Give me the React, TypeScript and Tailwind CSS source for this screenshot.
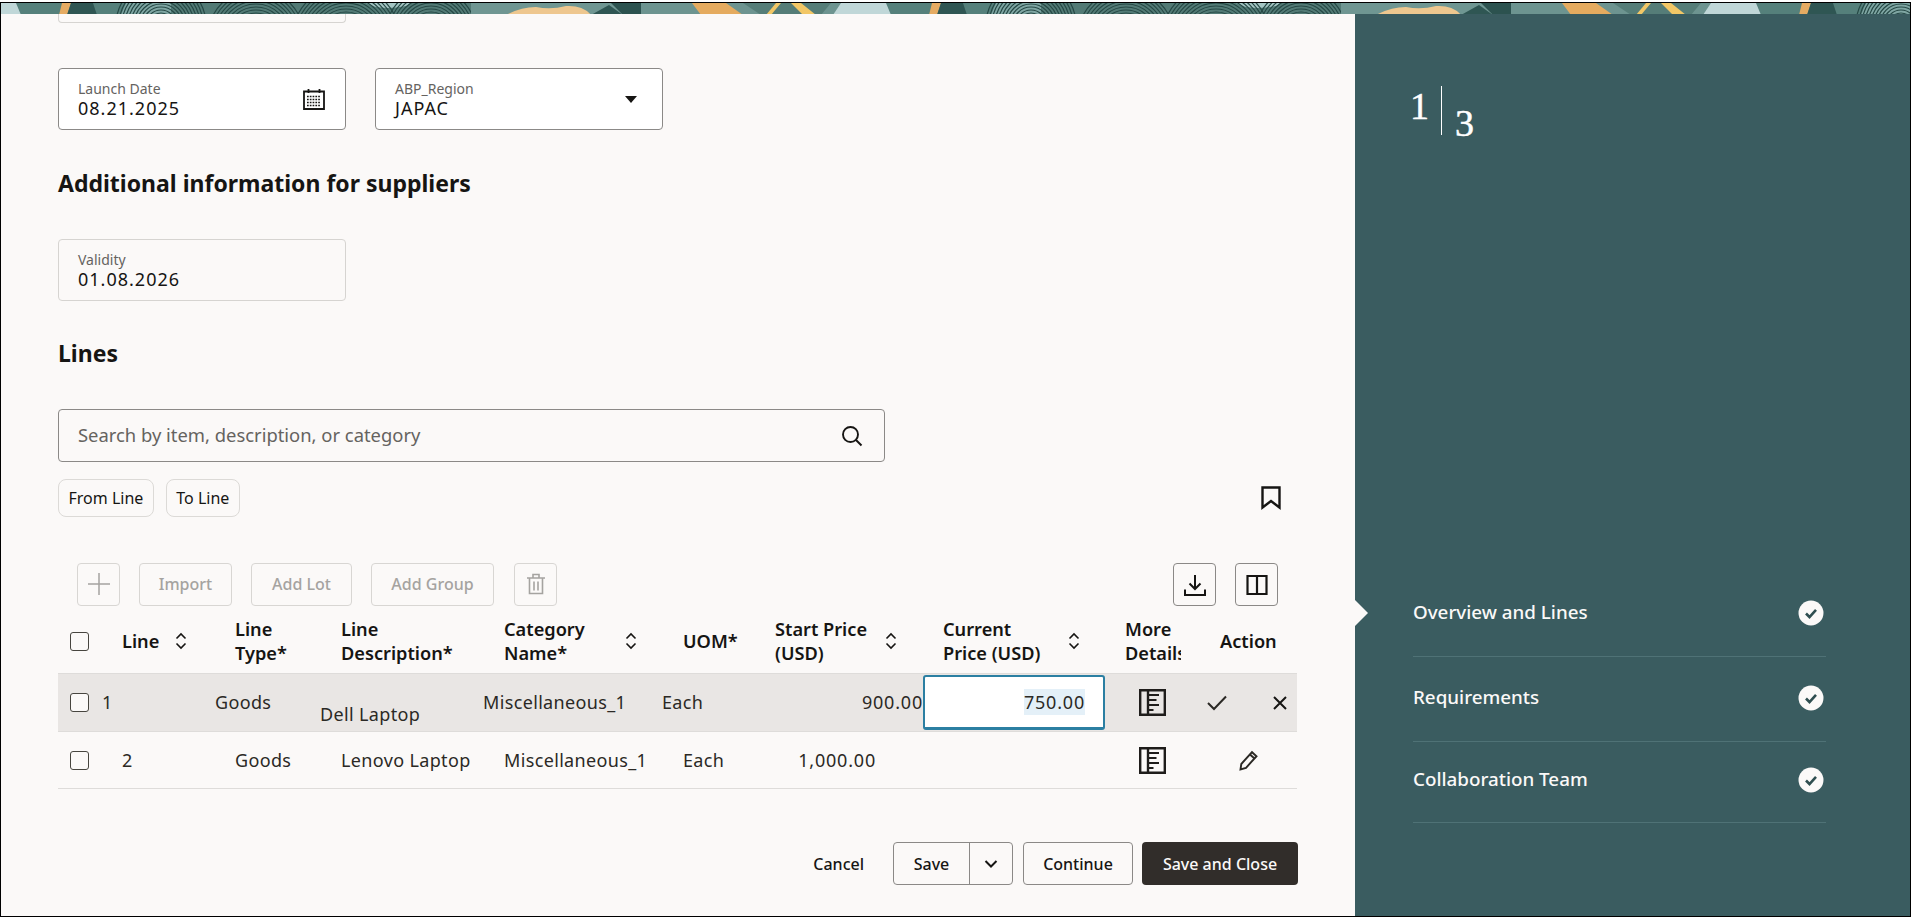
import type { ReactNode } from 'react'

const gridCols = 'grid grid-cols-[44px_113px_106px_163px_179px_92px_168px_182px_95px_97px]'

const arcCentres: [number, number, number][] = [
  [160, 22, 46],
  [255, 34, 50],
  [345, 36, 56],
  [430, 30, 46],
]

const arcRadii = [12, 15, 18, 21, 24, 27, 30, 33, 36, 39, 42, 45, 48, 51, 54]

function BannerTile() {
  return (
    <>
      <rect width="870" height="12" fill="#55807b" />
      <polygon points="0,0 15,0 20,12 0,12" fill="#c0d7d8" />
      <polygon points="61,0 70,0 66,12 58,12" fill="#e5ab62" />
      <polygon points="70,0 92,0 96,12 66,12" fill="#2f5653" />
      <polygon points="125,0 170,0 172,12 120,12" fill="#7fa6a3" />
      <rect x="170" width="300" height="12" fill="#527a75" />
      <path d="M365 0 Q378 8 405 3 L410 0Z" fill="#a5c6c4" />
      {arcCentres.map(([cx, cy, max]) =>
        arcRadii
          .filter((r) => r <= max)
          .map((r) => (
            <circle key={`${cx}-${r}`} cx={cx} cy={cy} r={r} fill="none" stroke="#254845" strokeWidth="1.2" />
          )),
      )}
      <rect x="470" width="170" height="12" fill="#6f9692" />
      <path d="M505 12 Q520 4 535 4 Q550 7 565 3 Q582 2 590 12Z" fill="#eec78f" />
      <polygon points="590,12 608,2 622,12" fill="#2f5653" />
      <polygon points="610,0 640,0 640,12 622,12" fill="#2c524f" />
      <rect x="640" width="230" height="12" fill="#6d9490" />
      <polygon points="691,0 725,0 742,12 700,12" fill="#e5ab5f" />
      <polygon points="742,0 830,0 820,12 760,12" fill="#557d78" />
      <polygon points="775,0 780,0 770,12 765,12" fill="#f2c766" />
      <polygon points="790,0 800,0 815,12 802,12" fill="#f2c766" />
      <polygon points="832,12 840,0 870,0 870,12" fill="#c0d7d8" />
    </>
  )
}

function Banner() {
  return (
    <svg className="block h-[11px] w-full shrink-0" viewBox="0 0 1909 11" preserveAspectRatio="none">
      <defs>
        <pattern id="banner-tile" width="870" height="11" patternUnits="userSpaceOnUse" x="0" y="0">
          <BannerTile />
        </pattern>
      </defs>
      <rect width="1909" height="11" fill="url(#banner-tile)" />
    </svg>
  )
}

function Field({
  label,
  value,
  icon,
  readOnly,
}: {
  label: string
  value: string
  icon?: ReactNode
  readOnly?: boolean
}) {
  return (
    <div
      className={`flex h-[62px] w-[288px] items-center justify-between rounded-[4px] border pl-[19px] pr-[15px] ${
        readOnly ? 'border-[#d6d4d1]' : 'border-[#8b8987] bg-white'
      }`}
    >
      <div className="pt-[1px]">
        <div className="text-[14px] leading-[16px] text-[#65635f]">{label}</div>
        <div className="text-[18px] leading-[22px] tracking-[1px] text-[#161513]">{value}</div>
      </div>
      {icon}
    </div>
  )
}

function SortIcon() {
  return (
    <svg viewBox="0 0 14 20" className="h-[20px] w-[14px] shrink-0" fill="none" stroke="#161513" strokeWidth="1.6">
      <path d="M2.5 7.5 7 3l4.5 4.5M2.5 12.5 7 17l4.5-4.5" />
    </svg>
  )
}

function Checkbox() {
  return <div className="h-[19px] w-[19px] rounded-[3px] border-[1.5px] border-[#47453f] bg-[#fbf9f8]" />
}

function DetailsIcon() {
  return (
    <svg viewBox="0 0 27 27" className="h-[27px] w-[27px]" fill="none" stroke="#1f1d1b" strokeWidth="2.4">
      <path d="M1.2 1.2h24.6v24.6H1.2z" />
      <path d="M9 1.2v24.6" />
      <path d="M9 6h11M9 11h8.5M9 16h11M9 21h5.5" strokeWidth="2" />
    </svg>
  )
}

function ToolButton({ children, className }: { children: ReactNode; className: string }) {
  return (
    <div
      className={`flex h-[43px] items-center justify-center rounded-[4px] border border-[#d8d6d3] pb-[1px] text-[16px] font-medium text-[#a5a3a0] ${className}`}
    >
      {children}
    </div>
  )
}

function IconButton({ children }: { children: ReactNode }) {
  return (
    <div className="flex h-[43px] w-[43px] items-center justify-center rounded-[4px] border border-[#8b8987]">
      {children}
    </div>
  )
}

function HeaderCell({ lines, labelWidth, sort }: { lines: string[]; labelWidth: string; sort?: boolean }) {
  return (
    <div className="flex items-center pl-[20px]">
      <div className={`text-[18.2px] font-semibold leading-[24px] text-[#161513] ${labelWidth}`}>
        {lines.map((l) => (
          <div key={l} className="whitespace-nowrap">
            {l}
          </div>
        ))}
      </div>
      {sort && <SortIcon />}
    </div>
  )
}

function Step({ name, pad }: { name: string; pad: string }) {
  return (
    <div className={`relative flex items-center justify-between border-b border-[#4f7276] pr-[1px] ${pad}`}>
      <span className="text-[18.8px] font-medium text-[#fbf9f8]">{name}</span>
      <svg viewBox="0 0 26 26" className="mr-[1px] h-[26px] w-[26px]">
        <circle cx="13" cy="13" r="12.5" fill="#fbf9f8" />
        <path d="M8 13.5l3.5 3.5L18 9.8" fill="none" stroke="#2f4e50" strokeWidth="2.6" />
      </svg>
    </div>
  )
}

export default function App() {
  const cell = 'flex items-center text-[18px] tracking-[0.35px] text-[#2b2925]'
  const amount = 'flex items-center justify-end text-[18px] tracking-[0.8px] text-[#2b2925]'
  return (
    <div className="h-[919px] w-[1911px] overflow-hidden bg-white pt-[2px] font-['Noto_Sans',sans-serif]">
      <div className="flex h-[915px] flex-col border border-black">
        <Banner />
        <div className="flex min-h-0 flex-1">
          <main className="w-[1354px] bg-[#fbf9f8] pl-[57px]">
            <div className="h-[9px] w-[288px] rounded-b-[4px] border border-t-0 border-[#d6d4d1]" />

            <div className="mt-[45px] flex gap-[29px]">
              <Field
                label="Launch Date"
                value="08.21.2025"
                icon={
                  <svg viewBox="0 0 22 22" className="mr-[5px] h-[22px] w-[22px]" fill="none" stroke="#161513">
                    <path d="M1 3.5h20v17.5H1z" strokeWidth="1.8" />
                    <path d="M5.5 1v4M16.5 1v4" strokeWidth="1.8" />
                    <path
                      d="M4 8.5h14M4 11.5h14M4 14.5h14M4 17.5h14"
                      strokeWidth="1.6"
                      strokeDasharray="1.7 1.1"
                    />
                  </svg>
                }
              />
              <Field
                label="ABP_Region"
                value="JAPAC"
                icon={
                  <svg viewBox="0 0 12 7" className="mr-[10px] h-[7px] w-[12px]" fill="#161513">
                    <path d="M0 0h12L6 7z" />
                  </svg>
                }
              />
            </div>

            <h2 className="mt-[38px] h-[30px] text-[23px] font-bold leading-[30px] text-[#161513]">
              Additional information for suppliers
            </h2>

            <div className="mt-[41px]">
              <Field label="Validity" value="01.08.2026" readOnly />
            </div>

            <h2 className="mt-[37px] h-[30px] text-[23px] font-bold leading-[30px] text-[#161513]">Lines</h2>

            <div className="mt-[41px] flex h-[53px] w-[827px] items-center justify-between rounded-[4px] border border-[#8b8987] pl-[19px] pr-[21px]">
              <span className="pb-[2px] text-[18.4px] text-[#65635f]">Search by item, description, or category</span>
              <svg viewBox="0 0 22 22" className="h-[22px] w-[22px]" fill="none" stroke="#161513" strokeWidth="1.9">
                <circle cx="9.5" cy="9.5" r="7.5" />
                <path d="M15 15l5.5 5.5" />
              </svg>
            </div>

            <div className="mt-[17px] flex h-[38px] w-[1239px] items-center justify-between pr-[16px]">
              <div className="flex gap-[12px]">
                {['From Line', 'To Line'].map((chip) => (
                  <div
                    key={chip}
                    className="flex h-[38px] items-center rounded-[8px] border border-[#dcdad7] px-[9.5px] text-[16px] text-[#161513]"
                  >
                    {chip}
                  </div>
                ))}
              </div>
              <svg viewBox="0 0 20 24" className="h-[24px] w-[20px]" fill="none" stroke="#161513" strokeWidth="2.4">
                <path d="M1.5 1.5h17v20L10 15l-8.5 6.5z" />
              </svg>
            </div>

            <div className="mt-[46px] flex h-[43px] w-[1239px] items-center justify-between px-[19px]">
              <div className="flex gap-[19px]">
                <ToolButton className="w-[43px]">
                  <svg viewBox="0 0 24 24" className="h-[24px] w-[24px]" stroke="#a5a3a0" strokeWidth="1.5">
                    <path d="M12 1v22M1 12h22" />
                  </svg>
                </ToolButton>
                <ToolButton className="w-[93px]">Import</ToolButton>
                <ToolButton className="w-[101px]">Add Lot</ToolButton>
                <ToolButton className="w-[123px]">Add Group</ToolButton>
                <ToolButton className="ml-px w-[43px]">
                  <svg viewBox="0 0 20 22" className="h-[22px] w-[20px]" fill="none" stroke="#a5a3a0" strokeWidth="1.6">
                    <path d="M1 5h18M7 5V1.5h6V5M3.5 5v15.5h13V5M8 8.5v9M12 8.5v9" />
                  </svg>
                </ToolButton>
              </div>
              <div className="flex gap-[19px]">
                <IconButton>
                  <svg viewBox="0 0 24 24" className="h-[24px] w-[24px]" fill="none" stroke="#161513" strokeWidth="2">
                    <path d="M12 2v14M6.5 10.5 12 16l5.5-5.5M2 16.5V22h20v-5.5" />
                  </svg>
                </IconButton>
                <IconButton>
                  <svg viewBox="0 0 22 22" className="h-[22px] w-[22px]" fill="none" stroke="#161513" strokeWidth="2.2">
                    <path d="M1.5 2h19v18h-19zM11 2v18" />
                  </svg>
                </IconButton>
              </div>
            </div>

            <div className="w-[1239px]">
              <div className={`${gridCols} h-[68px] border-b border-[#dedcda] pt-[3px]`}>
                <div className="flex items-center pl-[12px]">
                  <Checkbox />
                </div>
                <HeaderCell lines={['Line']} labelWidth="w-[52px]" sort />
                <HeaderCell lines={['Line', 'Type*']} labelWidth="" />
                <HeaderCell lines={['Line', 'Description*']} labelWidth="" />
                <HeaderCell lines={['Category', 'Name*']} labelWidth="w-[120px]" sort />
                <HeaderCell lines={['UOM*']} labelWidth="" />
                <HeaderCell lines={['Start Price', '(USD)']} labelWidth="w-[109px]" sort />
                <HeaderCell lines={['Current', 'Price (USD)']} labelWidth="w-[124px]" sort />
                <div className="flex items-center overflow-hidden pl-[20px] pr-[19px]">
                  <div className="overflow-hidden text-[18.2px] font-semibold leading-[24px] text-[#161513]">
                    <div>More</div>
                    <div className="whitespace-nowrap">Details</div>
                  </div>
                </div>
                <HeaderCell lines={['Action']} labelWidth="" />
              </div>

              <div className={`${gridCols} h-[58px] border-b border-[#dedcda] bg-[#e9e6e4]`}>
                <div className="flex items-center pl-[12px]">
                  <Checkbox />
                </div>
                <div className={cell}>1</div>
                <div className={cell}>Goods</div>
                <div className={`${cell} -ml-px pt-[24px]`}>Dell Laptop</div>
                <div className={`${cell} -ml-px`}>Miscellaneous_1</div>
                <div className={`${cell} -ml-px`}>Each</div>
                <div className={amount}>900.00</div>
                <div className="flex items-center">
                  <div className="flex h-[55px] w-[182px] items-center justify-end rounded-[3px] border-x-2 border-t-2 border-b-[3px] border-[#2b7fa2] bg-white pr-[18px]">
                    <span className="flex h-[26px] items-center bg-[#e4f0f8] text-[18px] tracking-[0.8px] text-[#2b2925]">
                      750.00
                    </span>
                  </div>
                </div>
                <div className="flex items-center justify-center">
                  <DetailsIcon />
                </div>
                <div className="flex items-center justify-between pl-[7px] pr-[9px]">
                  <svg viewBox="0 0 20 16" className="h-[16px] w-[20px]" fill="none" stroke="#2b2925" strokeWidth="2">
                    <path d="M1 8l6 6L19 1.5" />
                  </svg>
                  <svg viewBox="0 0 16 16" className="h-[16px] w-[16px]" fill="none" stroke="#161513" strokeWidth="2">
                    <path d="M2 2l12 12M14 2 2 14" />
                  </svg>
                </div>
              </div>

              <div className={`${gridCols} h-[57px] border-b border-[#dedcda]`}>
                <div className="flex items-center pl-[12px]">
                  <Checkbox />
                </div>
                <div className={`${cell} pl-[20px]`}>2</div>
                <div className={`${cell} pl-[20px]`}>Goods</div>
                <div className={`${cell} pl-[20px]`}>Lenovo Laptop</div>
                <div className={`${cell} pl-[20px]`}>Miscellaneous_1</div>
                <div className={`${cell} pl-[20px]`}>Each</div>
                <div className={`${amount} pr-[47px]`}>1,000.00</div>
                <div />
                <div className="flex items-center justify-center">
                  <DetailsIcon />
                </div>
                <div className="flex items-center justify-center">
                  <svg viewBox="0 0 20 22" className="h-[22px] w-[20px]" fill="none" stroke="#2b2925" strokeWidth="1.9">
                    <path d="M1.5 20.5l.8-5.5L13 3.2l4.5 4L7 18.8z" />
                    <path d="M11 5.5l4.5 4" />
                  </svg>
                </div>
              </div>

              <div className="mt-[53px] flex h-[43px] items-center justify-end gap-[10px] text-[16px] font-medium text-[#161513]">
                <span className="mr-[19px]">Cancel</span>
                <div className="flex h-[43px] w-[120px] rounded-[4px] border border-[#8b8987]">
                  <div className="flex w-[76px] items-center justify-center border-r border-[#8b8987]">Save</div>
                  <div className="flex flex-1 items-center justify-center">
                    <svg viewBox="0 0 14 8" className="h-[8px] w-[14px]" fill="none" stroke="#161513" strokeWidth="2">
                      <path d="M1.5 1 7 6.5 12.5 1" />
                    </svg>
                  </div>
                </div>
                <div className="flex h-[43px] w-[110px] items-center justify-center rounded-[4px] border border-[#8b8987]">
                  Continue
                </div>
                <div className="-mr-px ml-[-1px] flex h-[43px] w-[156px] items-center justify-center rounded-[4px] bg-[#312d2a] text-[#fbf9f8]">
                  Save and Close
                </div>
              </div>
            </div>
          </main>

          <aside className="relative flex-1 bg-[#3a5c60] pl-[58px] pr-[84px]">
            <div className="-ml-[3px] flex h-[72px] items-start pt-[72px]">
              <span className="mt-[1px] font-['Liberation_Serif',serif] text-[38px] leading-[38px] text-white [-webkit-text-stroke:0.5px_white]">
                1
              </span>
              <span className="ml-[12px] h-[49px] w-px bg-white" />
              <span className="ml-[13px] mt-[18px] font-['Liberation_Serif',serif] text-[38px] leading-[38px] text-white [-webkit-text-stroke:0.5px_white]">
                3
              </span>
            </div>

            <div className="mt-[486px]">
              <div className="absolute left-0 top-[586px] h-[26px] w-[13px] bg-[#fbf9f8] [clip-path:polygon(0_0,100%_50%,0_100%)]" />
              <Step name="Overview and Lines" pad="h-[85px] pb-[3px]" />
              <Step name="Requirements" pad="h-[85px] pb-[3px]" />
              <Step name="Collaboration Team" pad="h-[81px] pb-[5px]" />
            </div>
          </aside>
        </div>
      </div>
    </div>
  )
}
